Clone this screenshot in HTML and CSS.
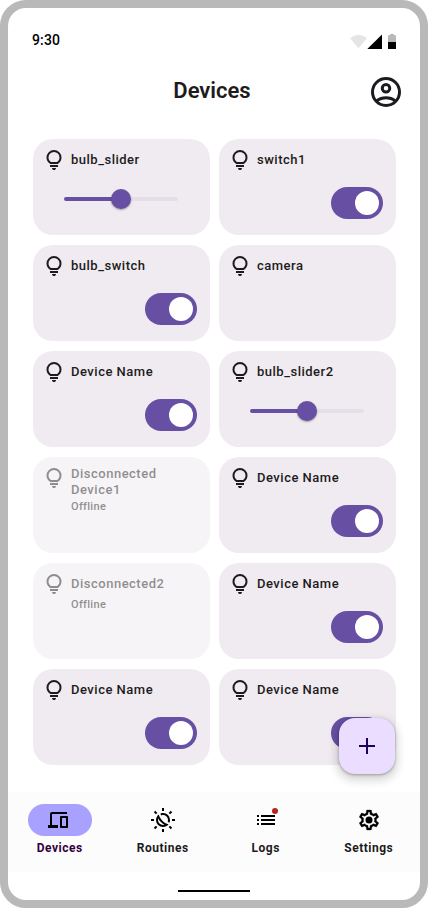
FILE: index.html
```html
<!DOCTYPE html>
<html lang="en">
<head>
<meta charset="utf-8">
<title>Devices</title>
<link rel="stylesheet" href="styles.css">
</head>
<body>
<svg class="defs" width="0" height="0" aria-hidden="true">
  <symbol id="bulb" viewBox="0 -960 960 960"><path d="M480-80q-33 0-56.5-23.5T400-160h160q0 33-23.5 56.5T480-80ZM320-200v-80h320v80H320Zm10-120q-69-41-109.5-110T180-580q0-125 87.5-212.5T480-880q125 0 212.5 87.5T780-580q0 81-40.5 150T630-320H330Zm24-80h252q45-32 69.5-79T700-580q0-92-64-156t-156-64q-92 0-156 64t-64 156q0 54 24.5 101t69.5 79Z"/></symbol>
</svg>
<div class="phone">
  <div class="status">
    <span class="time">9:30</span>
    <svg class="status-icons" width="46" height="16" viewBox="0 0 46 16">
      <path d="M0 4.2Q8.5-2.8 17 4.2L8.5 14.3Z" fill="#e5e5e5"/>
      <path d="M17.3 15H32V.4Z"/>
      <path d="M38 1.3h2V0h4v1.3h2V8h-8Z" fill="#b9b9b9"/>
      <path d="M38 8h8v7h-8Z"/>
    </svg>
  </div>
  <header class="header">
    <h1>Devices</h1>
    <svg class="avatar" viewBox="0 0 24 24" fill="none" stroke="#1d1b20" stroke-width="2"><circle cx="12" cy="12" r="9"/><circle cx="12" cy="9.5" r="2.5"/><path d="M5.6 17.9Q8.5 15.8 12 15.8T18.4 17.9"/></svg>
  </header>
  <main class="grid">
    <section class="card"><svg class="bulb"><use href="#bulb"/></svg><div class="label">bulb_slider</div><div class="slider"><i></i></div></section>
    <section class="card"><svg class="bulb"><use href="#bulb"/></svg><div class="label">switch1</div><div class="toggle"><i></i></div></section>
    <section class="card"><svg class="bulb"><use href="#bulb"/></svg><div class="label">bulb_switch</div><div class="toggle"><i></i></div></section>
    <section class="card"><svg class="bulb"><use href="#bulb"/></svg><div class="label">camera</div></section>
    <section class="card"><svg class="bulb"><use href="#bulb"/></svg><div class="label">Device Name</div><div class="toggle"><i></i></div></section>
    <section class="card"><svg class="bulb"><use href="#bulb"/></svg><div class="label">bulb_slider2</div><div class="slider"><i></i></div></section>
    <section class="card offline two-line"><svg class="bulb"><use href="#bulb"/></svg><div class="label">Disconnected Device1<small>Offline</small></div></section>
    <section class="card"><svg class="bulb"><use href="#bulb"/></svg><div class="label">Device Name</div><div class="toggle"><i></i></div></section>
    <section class="card offline"><svg class="bulb"><use href="#bulb"/></svg><div class="label">Disconnected2<small>Offline</small></div></section>
    <section class="card"><svg class="bulb"><use href="#bulb"/></svg><div class="label">Device Name</div><div class="toggle"><i></i></div></section>
    <section class="card"><svg class="bulb"><use href="#bulb"/></svg><div class="label">Device Name</div><div class="toggle"><i></i></div></section>
    <section class="card"><svg class="bulb"><use href="#bulb"/></svg><div class="label">Device Name</div><div class="toggle"><i></i></div></section>
  </main>
  <div class="fab"><svg width="24" height="24" viewBox="0 0 24 24"><path d="M11 4h2v7h7v2h-7v7h-2v-7H4v-2h7Z" fill="#21005d"/></svg></div>
  <nav class="nav">
    <div class="tab active"><span class="pill"><svg viewBox="0 -960 960 960"><path d="M80-160v-120h80v-440q0-33 23.5-56.5T240-800h600v80H240v440h240v120H80Zm520 0q-17 0-28.5-11.5T560-200v-400q0-17 11.5-28.5T600-640h240q17 0 28.5 11.5T880-600v400q0 17-11.5 28.5T840-160H600Zm40-80h160v-320H640v320Z"/></svg></span>Devices</div>
    <div class="tab"><span class="pill"><svg viewBox="0 -960 960 960"><path d="M396-396q-32-32-58.5-67T289-537q-5 14-6.500 28.500T281-480q0 83 58 141t141 58q14 0 28.500-2t28.500-6q-39-22-74-48.500T396-396Zm57-56q51 51 114 87.500T702-308q-40 51-98 79.500T481-200q-117 0-198.500-81.500T201-480q0-65 28.500-123t79.500-98q20 72 56.500 135T453-452Zm290 72q-20-5-39.500-11T665-405q8-18 11.500-36.500T680-480q0-83-58.500-141.500T480-680q-20 0-38.500 3.500T405-665q-8-19-13.500-38T381-742q24-9 49-13.500t51-4.500q117 0 198.500 81.500T761-480q0 26-4.500 51T743-380ZM440-840v-120h80v120h-80Zm0 840v-120h80V0h-80Zm323-706-57-57 85-84 57 56-85 85ZM169-113l-57-56 85-85 57 57-85 84Zm671-327v-80h120v80H840ZM0-440v-80h120v80H0Zm791 328-85-85 57-57 84 85-56 57ZM197-706l-84-85 56-57 85 85-57 57Z"/></svg></span>Routines</div>
    <div class="tab"><span class="pill"><svg viewBox="0 0 24 24"><path d="M3 7h2v2H3Zm0 4h2v2H3Zm0 4h2v2H3ZM7 7h14v2H7Zm0 4h14v2H7Zm0 4h14v2H7Z"/></svg><b class="dot"></b></span>Logs</div>
    <div class="tab"><span class="pill"><svg viewBox="0 0 24 24"><path stroke="#000" stroke-width=".3" d="M19.430 12.980c.04-.32.07-.64.07-.98 0-.34-.03-.66-.07-.98l2.110-1.650c.19-.15.24-.42.12-.64l-2-3.460c-.09-.16-.26-.25-.44-.25-.06 0-.12.01-.17.03l-2.490 1c-.52-.4-1.080-.73-1.690-.98l-.38-2.650C14.460 2.180 14.250 2 14 2h-4c-.25 0-.46.18-.49.42l-.38 2.650c-.61.25-1.170.59-1.690.98l-2.490-1c-.06-.02-.12-.03-.18-.03-.17 0-.34.09-.43.25l-2 3.460c-.13.22-.07.49.12.64l2.110 1.650c-.04.32-.07.65-.07.98 0 .33.03.66.07.98l-2.110 1.650c-.19.15-.24.42-.12.64l2 3.460c.09.16.26.25.44.25.06 0 .12-.01.17-.03l2.490-1c.52.4 1.080.73 1.690.98l.38 2.650c.03.24.24.42.49.42h4c.25 0 .46-.18.49-.42l.38-2.650c.61-.25 1.170-.59 1.690-.98l2.490 1c.06.02.12.03.18.03.17 0 .34-.09.43-.25l2-3.460c.12-.22.07-.49-.12-.64l-2.110-1.650zm-1.980-1.710c.04.31.05.52.05.73 0 .21-.02.43-.05.73l-.14 1.130.89.7 1.080.84-.7 1.210-1.270-.51-1.040-.42-.9.68c-.43.32-.84.56-1.250.73l-1.060.43-.16 1.130-.2 1.350h-1.400l-.19-1.350-.16-1.130-1.060-.43c-.43-.18-.83-.41-1.230-.71l-.91-.7-1.060.43-1.270.51-.7-1.210 1.080-.84.89-.7-.14-1.130c-.03-.31-.05-.54-.05-.74s.02-.43.05-.73l.14-1.130-.89-.7-1.080-.84.7-1.210 1.270.51 1.040.42.9-.68c.43-.32.84-.56 1.250-.73l1.060-.43.16-1.130.2-1.350h1.390l.19 1.350.16 1.130 1.060.43c.43.18.83.41 1.230.71l.91.7 1.060-.43 1.270-.51.7 1.210-1.070.85-.89.7.14 1.130z"/><circle cx="12" cy="12" r="3.5"/></svg></span>Settings</div>
  </nav>
  <div class="home"></div>
</div>
</body>
</html>
```
FILE: styles.css
```css
* { box-sizing: border-box; }
body { margin: 0; background: #fff; font-family: Roboto, sans-serif; color: #1d1b20; }
.defs { position: absolute; }
.phone {
  position: relative;
  width: 428px; height: 908px;
  border: 8px solid #b9b9b9; border-radius: 26px;
  background: #fff; overflow: hidden;
  display: flex; flex-direction: column;
}
.status {
  height: 52px; padding: 22px 24px 0;
  display: flex; justify-content: space-between; align-items: flex-start;
}
.time { font-size: 14px; line-height: 20px; font-weight: 500; letter-spacing: .14px; color: #000; }
.status-icons { margin-top: 4px; }
.header {
  height: 64px; padding: 0 16px 0 52px;
  display: flex; align-items: center; justify-content: space-between;
}
.header h1 { flex: 1; margin: -2px 4px 0 0; text-align: center; font-size: 22px; line-height: 28px; font-weight: 600; }
.avatar { width: 36px; height: 36px; }
.grid {
  height: 668px; padding: 15px 24px 0 25px;
  display: grid; grid-template-columns: 177px 177px; grid-auto-rows: 96px;
  gap: 10px 9px;
}
.card {
  background: #f0ebf1; border-radius: 20px; padding: 9px 13px 16px 9px;
  display: grid; grid-template-columns: 24px 1fr; column-gap: 5px;
  grid-template-rows: 24px 1fr;
}
.bulb { width: 24px; height: 24px; fill: #1d1b20; }
.label { font-size: 13px; line-height: 16px; font-weight: 500; letter-spacing: .5px; padding-top: 4px; }
.label small { display: block; font-size: 11px; line-height: 16px; padding-top: 5px; letter-spacing: .3px; }
.offline { opacity: .5; }
.two-line .label { padding-top: 0; width: 100px; }
.two-line small { padding-top: 1px; }
.toggle {
  grid-column: 1 / 3; justify-self: end; align-self: end;
  width: 52px; height: 32px; padding: 4px; border-radius: 16px; background: #6750a4;
  display: flex; justify-content: flex-end;
}
.toggle i { width: 24px; height: 24px; border-radius: 50%; background: #fff; }
.slider {
  grid-column: 1 / 3; width: 114px; height: 4px; margin: 25px 0 0 22px; border-radius: 2px;
  background: linear-gradient(90deg, #6750a4 50%, #e4dfe6 50%);
  display: flex; align-items: center; justify-content: center;
}
.slider i { flex: none; width: 20px; height: 20px; border-radius: 50%; background: #6750a4; box-shadow: 0 1px 2px rgba(0,0,0,.35); }
.fab {
  position: absolute; left: 331px; top: 710px; width: 56px; height: 56px;
  border-radius: 16px; background: #eaddff;
  box-shadow: 0 1px 3px rgba(0,0,0,.3), 0 4px 8px 3px rgba(0,0,0,.15);
  display: flex; align-items: center; justify-content: center;
}
.nav { height: 80px; background: #fcfcfc; display: flex; padding-top: 12px; }
.tab {
  flex: 1; display: flex; flex-direction: column; align-items: center; gap: 4px;
  font-size: 12px; line-height: 16px; font-weight: 700; letter-spacing: .5px; text-indent: .5px;
}
.pill { position: relative; width: 64px; height: 32px; border-radius: 16px; display: flex; align-items: center; justify-content: center; }
.pill svg { width: 24px; height: 24px; }
.active { color: #31003f; }
.active .pill { background: #a8a1ff; padding-right: 3px; }
.dot { position: absolute; left: 38px; top: 4px; width: 6px; height: 6px; border-radius: 50%; background: #b3261e; }
.home { width: 72px; height: 2px; margin: 18px 0 0 170px; background: #000; }
```
